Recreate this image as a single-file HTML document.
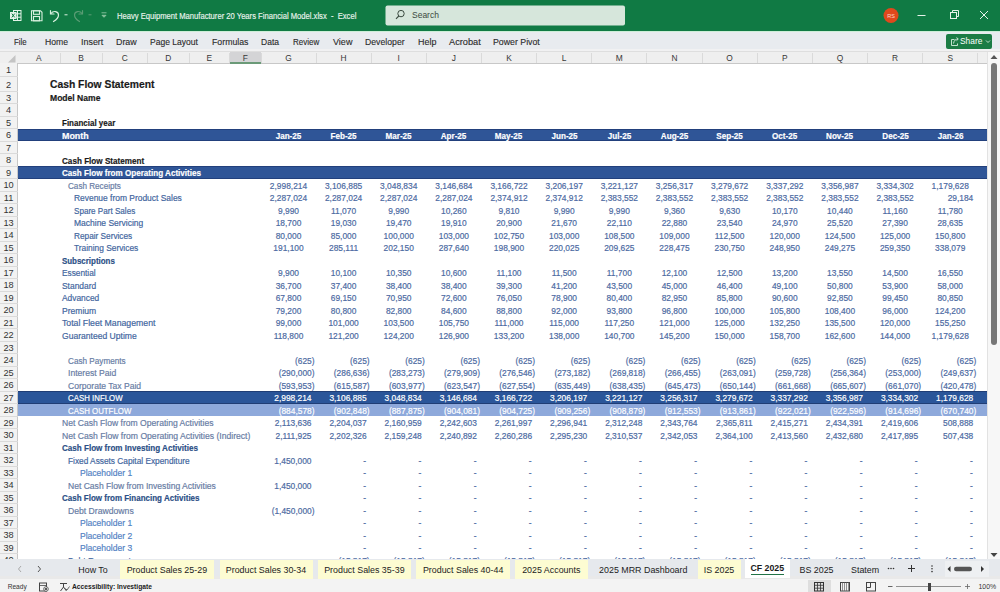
<!DOCTYPE html><html><head><meta charset="utf-8"><style>
*{margin:0;padding:0;box-sizing:border-box}
html,body{width:1000px;height:592px;overflow:hidden;background:#fff}
body{position:relative;font-family:"Liberation Sans",sans-serif;}
.a{position:absolute;white-space:nowrap}
.tb{position:absolute;left:0;top:0;width:1000px;height:31.6px;background:#107a44;border-bottom:1px solid #cdeed8}
.rb{position:absolute;left:0;top:31.6px;width:1000px;height:20.4px;background:#e8ebef}
.ch{position:absolute;left:0;top:52px;width:987px;height:11.5px;background:#efefef;border-bottom:1px solid #c8c8c8}
.rh{position:absolute;left:0;top:63px;width:17.5px;height:496px;background:#f2f2f2;border-right:1px solid #c8c8c8}
.cl{position:absolute;top:52.6px;height:11px;font-size:8.4px;color:#383838;text-align:center;line-height:11.5px}
.sep{position:absolute;top:53px;width:1px;height:10px;background:#dadada}
.rn{position:absolute;left:0;width:17px;font-size:9.2px;color:#333;text-align:center}
.c{position:absolute;font-size:8.4px;white-space:nowrap;line-height:1;-webkit-text-stroke:0.18px currentColor}
.t2{font-size:10.2px;font-weight:bold;color:#1a1a1a}
.t3{font-size:8.5px;font-weight:bold;color:#1a1a1a}
.hb{font-size:8.8px;font-weight:bold;color:#1a1a1a}
.hw{font-size:8.8px;font-weight:bold;color:#fff}
.sb{font-size:8.8px;font-weight:bold;color:#2b4f86}
.lg{color:#677ca4}
.lb{color:#41659e}
.lw{color:#fff}
.ph{color:#5382c4}
.dash{color:#7d92b6}
.cap{}
.num{color:#4c6aa2}
.band{position:absolute;left:17.5px;width:969.5px}
.tabs{position:absolute;left:0;top:558.75px;width:1000px;height:17.6px;background:#e6e9ed}
.status{position:absolute;left:0;top:576.3px;width:1000px;height:15.7px;background:#f3f3f3;border-top:3px solid #e9e9e9}
.tab{position:absolute;top:559.5px;height:19px;font-size:8.9px;color:#222;line-height:20px;text-align:center}
.ylw{background:#fdfcd0}
.menu{position:absolute;top:35.5px;font-size:9.1px;color:#2a2a2a;line-height:12px;-webkit-text-stroke:0.12px #2a2a2a}
</style></head><body>

<div class="tb"></div>
<div class="rb"></div>
<div class="ch"></div>
<div class="rh"></div>
<div class="cl" style="left:17.5px;width:42.8px">A</div>
<div class="sep" style="left:59.8px"></div>
<div class="cl" style="left:60.3px;width:41.7px">B</div>
<div class="sep" style="left:101.5px"></div>
<div class="cl" style="left:102px;width:45.5px">C</div>
<div class="sep" style="left:147.0px"></div>
<div class="cl" style="left:147.5px;width:41.5px">D</div>
<div class="sep" style="left:188.5px"></div>
<div class="cl" style="left:189px;width:40.80000000000001px">E</div>
<div class="sep" style="left:229.3px"></div>
<div class="a" style="left:229.8px;top:52px;width:31.19999999999999px;height:11.5px;background:#d4d4d6;border-bottom:2px solid #6b9a78"></div>
<div class="cl" style="left:229.8px;width:31.19999999999999px">F</div>
<div class="sep" style="left:260.5px"></div>
<div class="cl" style="left:261px;width:55.0px">G</div>
<div class="sep" style="left:315.5px"></div>
<div class="cl" style="left:316.0px;width:55.14999999999998px">H</div>
<div class="sep" style="left:370.65px"></div>
<div class="cl" style="left:371.15px;width:55.150000000000034px">I</div>
<div class="sep" style="left:425.8px"></div>
<div class="cl" style="left:426.3px;width:55.14999999999998px">J</div>
<div class="sep" style="left:480.95px"></div>
<div class="cl" style="left:481.45px;width:55.150000000000034px">K</div>
<div class="sep" style="left:536.1px"></div>
<div class="cl" style="left:536.6px;width:55.14999999999998px">L</div>
<div class="sep" style="left:591.25px"></div>
<div class="cl" style="left:591.75px;width:55.14999999999998px">M</div>
<div class="sep" style="left:646.4px"></div>
<div class="cl" style="left:646.9px;width:55.14999999999998px">N</div>
<div class="sep" style="left:701.55px"></div>
<div class="cl" style="left:702.05px;width:55.15000000000009px">O</div>
<div class="sep" style="left:756.7px"></div>
<div class="cl" style="left:757.2px;width:55.149999999999864px">P</div>
<div class="sep" style="left:811.8499999999999px"></div>
<div class="cl" style="left:812.3499999999999px;width:55.15000000000009px">Q</div>
<div class="sep" style="left:867.0px"></div>
<div class="cl" style="left:867.5px;width:55.14999999999998px">R</div>
<div class="sep" style="left:922.15px"></div>
<div class="cl" style="left:922.65px;width:55.14999999999998px">S</div>
<div class="sep" style="left:977.3px"></div>
<div class="rn" style="top:63.7px;height:12.3px;line-height:12.3px">1</div>
<div class="a" style="left:0;top:75.5px;width:17.5px;height:1px;background:#dadada"></div>
<div class="rn" style="top:79.10000000000001px;height:12.3px;line-height:12.3px">2</div>
<div class="a" style="left:0;top:90.9px;width:17.5px;height:1px;background:#dadada"></div>
<div class="rn" style="top:91.60000000000001px;height:12.3px;line-height:12.3px">3</div>
<div class="a" style="left:0;top:103.4px;width:17.5px;height:1px;background:#dadada"></div>
<div class="rn" style="top:104.10000000000001px;height:12.3px;line-height:12.3px">4</div>
<div class="a" style="left:0;top:115.9px;width:17.5px;height:1px;background:#dadada"></div>
<div class="rn" style="top:116.60000000000001px;height:12.3px;line-height:12.3px">5</div>
<div class="a" style="left:0;top:128.4px;width:17.5px;height:1px;background:#dadada"></div>
<div class="rn" style="top:129.1px;height:12.3px;line-height:12.3px">6</div>
<div class="a" style="left:0;top:140.9px;width:17.5px;height:1px;background:#dadada"></div>
<div class="rn" style="top:141.6px;height:12.3px;line-height:12.3px">7</div>
<div class="a" style="left:0;top:153.4px;width:17.5px;height:1px;background:#dadada"></div>
<div class="rn" style="top:154.1px;height:12.3px;line-height:12.3px">8</div>
<div class="a" style="left:0;top:165.9px;width:17.5px;height:1px;background:#dadada"></div>
<div class="rn" style="top:166.6px;height:12.3px;line-height:12.3px">9</div>
<div class="a" style="left:0;top:178.4px;width:17.5px;height:1px;background:#dadada"></div>
<div class="rn" style="top:179.1px;height:12.3px;line-height:12.3px">10</div>
<div class="a" style="left:0;top:190.9px;width:17.5px;height:1px;background:#dadada"></div>
<div class="rn" style="top:191.6px;height:12.3px;line-height:12.3px">11</div>
<div class="a" style="left:0;top:203.4px;width:17.5px;height:1px;background:#dadada"></div>
<div class="rn" style="top:204.1px;height:12.3px;line-height:12.3px">12</div>
<div class="a" style="left:0;top:215.9px;width:17.5px;height:1px;background:#dadada"></div>
<div class="rn" style="top:216.6px;height:12.3px;line-height:12.3px">13</div>
<div class="a" style="left:0;top:228.4px;width:17.5px;height:1px;background:#dadada"></div>
<div class="rn" style="top:229.1px;height:12.3px;line-height:12.3px">14</div>
<div class="a" style="left:0;top:240.9px;width:17.5px;height:1px;background:#dadada"></div>
<div class="rn" style="top:241.6px;height:12.3px;line-height:12.3px">15</div>
<div class="a" style="left:0;top:253.4px;width:17.5px;height:1px;background:#dadada"></div>
<div class="rn" style="top:254.09999999999997px;height:12.3px;line-height:12.3px">16</div>
<div class="a" style="left:0;top:265.9px;width:17.5px;height:1px;background:#dadada"></div>
<div class="rn" style="top:266.59999999999997px;height:12.3px;line-height:12.3px">17</div>
<div class="a" style="left:0;top:278.4px;width:17.5px;height:1px;background:#dadada"></div>
<div class="rn" style="top:279.09999999999997px;height:12.3px;line-height:12.3px">18</div>
<div class="a" style="left:0;top:290.9px;width:17.5px;height:1px;background:#dadada"></div>
<div class="rn" style="top:291.59999999999997px;height:12.3px;line-height:12.3px">19</div>
<div class="a" style="left:0;top:303.4px;width:17.5px;height:1px;background:#dadada"></div>
<div class="rn" style="top:304.09999999999997px;height:12.3px;line-height:12.3px">20</div>
<div class="a" style="left:0;top:315.9px;width:17.5px;height:1px;background:#dadada"></div>
<div class="rn" style="top:316.59999999999997px;height:12.3px;line-height:12.3px">21</div>
<div class="a" style="left:0;top:328.4px;width:17.5px;height:1px;background:#dadada"></div>
<div class="rn" style="top:329.09999999999997px;height:12.3px;line-height:12.3px">22</div>
<div class="a" style="left:0;top:340.9px;width:17.5px;height:1px;background:#dadada"></div>
<div class="rn" style="top:341.59999999999997px;height:12.3px;line-height:12.3px">23</div>
<div class="a" style="left:0;top:353.4px;width:17.5px;height:1px;background:#dadada"></div>
<div class="rn" style="top:354.09999999999997px;height:12.3px;line-height:12.3px">24</div>
<div class="a" style="left:0;top:365.9px;width:17.5px;height:1px;background:#dadada"></div>
<div class="rn" style="top:366.59999999999997px;height:12.3px;line-height:12.3px">25</div>
<div class="a" style="left:0;top:378.4px;width:17.5px;height:1px;background:#dadada"></div>
<div class="rn" style="top:379.09999999999997px;height:12.3px;line-height:12.3px">26</div>
<div class="a" style="left:0;top:390.9px;width:17.5px;height:1px;background:#dadada"></div>
<div class="rn" style="top:391.59999999999997px;height:12.3px;line-height:12.3px">27</div>
<div class="a" style="left:0;top:403.4px;width:17.5px;height:1px;background:#dadada"></div>
<div class="rn" style="top:404.09999999999997px;height:12.3px;line-height:12.3px">28</div>
<div class="a" style="left:0;top:415.9px;width:17.5px;height:1px;background:#dadada"></div>
<div class="rn" style="top:416.59999999999997px;height:12.3px;line-height:12.3px">29</div>
<div class="a" style="left:0;top:428.4px;width:17.5px;height:1px;background:#dadada"></div>
<div class="rn" style="top:429.09999999999997px;height:12.3px;line-height:12.3px">30</div>
<div class="a" style="left:0;top:440.9px;width:17.5px;height:1px;background:#dadada"></div>
<div class="rn" style="top:441.59999999999997px;height:12.3px;line-height:12.3px">31</div>
<div class="a" style="left:0;top:453.4px;width:17.5px;height:1px;background:#dadada"></div>
<div class="rn" style="top:454.09999999999997px;height:12.3px;line-height:12.3px">32</div>
<div class="a" style="left:0;top:465.9px;width:17.5px;height:1px;background:#dadada"></div>
<div class="rn" style="top:466.59999999999997px;height:12.3px;line-height:12.3px">33</div>
<div class="a" style="left:0;top:478.4px;width:17.5px;height:1px;background:#dadada"></div>
<div class="rn" style="top:479.09999999999997px;height:12.3px;line-height:12.3px">34</div>
<div class="a" style="left:0;top:490.9px;width:17.5px;height:1px;background:#dadada"></div>
<div class="rn" style="top:491.59999999999997px;height:12.3px;line-height:12.3px">35</div>
<div class="a" style="left:0;top:503.4px;width:17.5px;height:1px;background:#dadada"></div>
<div class="rn" style="top:504.09999999999997px;height:12.3px;line-height:12.3px">36</div>
<div class="a" style="left:0;top:515.9px;width:17.5px;height:1px;background:#dadada"></div>
<div class="rn" style="top:516.6px;height:12.3px;line-height:12.3px">37</div>
<div class="a" style="left:0;top:528.4px;width:17.5px;height:1px;background:#dadada"></div>
<div class="rn" style="top:529.1px;height:12.3px;line-height:12.3px">38</div>
<div class="a" style="left:0;top:540.9px;width:17.5px;height:1px;background:#dadada"></div>
<div class="rn" style="top:541.6px;height:12.3px;line-height:12.3px">39</div>
<div class="a" style="left:0;top:553.4px;width:17.5px;height:1px;background:#dadada"></div>
<div class="rn" style="top:554.1px;height:12.3px;line-height:12.3px">40</div>
<div class="a" style="left:0;top:565.9px;width:17.5px;height:1px;background:#dadada"></div>
<div class="band" style="top:128.9px;height:12.5px;background:#2f5597;border-top:1px solid #22407c;border-bottom:1px solid #22407c"></div>
<div class="band" style="top:166.4px;height:12.5px;background:#2f5597;border-top:1px solid #22407c;border-bottom:1px solid #22407c"></div>
<div class="band" style="top:391.4px;height:12.5px;background:#2a5599;border-top:1px solid #1f3d75;border-bottom:1px solid #1f3d75"></div>
<div class="band" style="top:403.9px;height:12.5px;background:#8ea9db;border-top:1px solid #8ea9db;border-bottom:1px solid #8ea9db"></div>
<div class="c t2" style="left:50.4px;top:86.80000000000001px;transform:translateY(-70%) scaleX(1.0134);transform-origin:0 0">Cash Flow Statement</div>
<div class="c t3" style="left:50.4px;top:99.80000000000001px;transform:translateY(-70%) scaleX(1.0067);transform-origin:0 0">Model Name</div>
<div class="c hb" style="left:61.9px;top:125.30000000000001px;transform:translateY(-70%) scaleX(0.9084);transform-origin:0 0">Financial year</div>
<div class="c hw" style="left:61.9px;top:137.8px;transform:translateY(-70%) scaleX(1.0122);transform-origin:0 0">Month</div>
<div class="c hb" style="left:61.9px;top:162.8px;transform:translateY(-70%) scaleX(0.9240);transform-origin:0 0">Cash Flow Statement</div>
<div class="c hw" style="left:61.9px;top:175.3px;transform:translateY(-70%) scaleX(0.9193);transform-origin:0 0">Cash Flow from Operating Activities</div>
<div class="c lg" style="left:67.9px;top:187.8px;transform:translateY(-70%) scaleX(0.9695);transform-origin:0 0">Cash Receipts</div>
<div class="c lb" style="left:73.9px;top:200.3px;transform:translateY(-70%) scaleX(1.0068);transform-origin:0 0">Revenue from Product Sales</div>
<div class="c lb" style="left:73.9px;top:212.8px;transform:translateY(-70%) scaleX(0.9667);transform-origin:0 0">Spare Part Sales</div>
<div class="c lb" style="left:73.9px;top:225.3px;transform:translateY(-70%) scaleX(1.0128);transform-origin:0 0">Machine Servicing</div>
<div class="c lb" style="left:73.9px;top:237.8px;transform:translateY(-70%) scaleX(0.9846);transform-origin:0 0">Repair Services</div>
<div class="c lb" style="left:73.9px;top:250.3px;transform:translateY(-70%) scaleX(0.9971);transform-origin:0 0">Training Services</div>
<div class="c sb" style="left:61.9px;top:262.79999999999995px;transform:translateY(-70%) scaleX(0.9002);transform-origin:0 0">Subscriptions</div>
<div class="c lb" style="left:61.9px;top:275.29999999999995px;transform:translateY(-70%) scaleX(0.9887);transform-origin:0 0">Essential</div>
<div class="c lb" style="left:61.9px;top:287.79999999999995px;transform:translateY(-70%) scaleX(1.0062);transform-origin:0 0">Standard</div>
<div class="c lb" style="left:61.9px;top:300.29999999999995px;transform:translateY(-70%) scaleX(0.9987);transform-origin:0 0">Advanced</div>
<div class="c lb" style="left:61.9px;top:312.79999999999995px;transform:translateY(-70%) scaleX(1.0208);transform-origin:0 0">Premium</div>
<div class="c lb" style="left:61.9px;top:325.29999999999995px;transform:translateY(-70%) scaleX(1.0396);transform-origin:0 0">Total Fleet Management</div>
<div class="c lb" style="left:61.9px;top:337.79999999999995px;transform:translateY(-70%) scaleX(1.0220);transform-origin:0 0">Guaranteed Uptime</div>
<div class="c lg" style="left:67.9px;top:362.79999999999995px;transform:translateY(-70%) scaleX(0.9744);transform-origin:0 0">Cash Payments</div>
<div class="c lg" style="left:67.9px;top:375.29999999999995px;transform:translateY(-70%) scaleX(1.0272);transform-origin:0 0">Interest Paid</div>
<div class="c lg" style="left:67.9px;top:387.79999999999995px;transform:translateY(-70%) scaleX(1.0211);transform-origin:0 0">Corporate Tax Paid</div>
<div class="c lw cap" style="left:67.9px;top:400.29999999999995px;transform:translateY(-70%) scaleX(0.9387);transform-origin:0 0">CASH INFLOW</div>
<div class="c lw cap" style="left:67.9px;top:412.79999999999995px;transform:translateY(-70%) scaleX(0.9382);transform-origin:0 0">CASH OUTFLOW</div>
<div class="c lg" style="left:61.9px;top:425.29999999999995px;transform:translateY(-70%) scaleX(1.0231);transform-origin:0 0">Net Cash Flow from Operating Activities</div>
<div class="c lg" style="left:61.9px;top:437.79999999999995px;transform:translateY(-70%) scaleX(1.0270);transform-origin:0 0">Net Cash Flow from Operating Activities (Indirect)</div>
<div class="c sb" style="left:61.9px;top:450.29999999999995px;transform:translateY(-70%) scaleX(0.9172);transform-origin:0 0">Cash Flow from Investing Activities</div>
<div class="c lb" style="left:67.9px;top:462.79999999999995px;transform:translateY(-70%) scaleX(0.9898);transform-origin:0 0">Fixed Assets Capital Expenditure</div>
<div class="c lb ph" style="left:79.9px;top:475.29999999999995px;transform:translateY(-70%) scaleX(1.0192);transform-origin:0 0">Placeholder 1</div>
<div class="c lg" style="left:67.9px;top:487.79999999999995px;transform:translateY(-70%) scaleX(1.0213);transform-origin:0 0">Net Cash Flow from Investing Activities</div>
<div class="c sb" style="left:61.9px;top:500.29999999999995px;transform:translateY(-70%) scaleX(0.9094);transform-origin:0 0">Cash Flow from Financing Activities</div>
<div class="c lg" style="left:67.9px;top:512.8px;transform:translateY(-70%) scaleX(1.0303);transform-origin:0 0">Debt Drawdowns</div>
<div class="c lb ph" style="left:79.9px;top:525.3px;transform:translateY(-70%) scaleX(1.0192);transform-origin:0 0">Placeholder 1</div>
<div class="c lb ph" style="left:79.9px;top:537.8px;transform:translateY(-70%) scaleX(1.0192);transform-origin:0 0">Placeholder 2</div>
<div class="c lb ph" style="left:79.9px;top:550.3px;transform:translateY(-70%) scaleX(1.0192);transform-origin:0 0">Placeholder 3</div>
<div class="c lb" style="left:67.9px;top:563.0999999999999px;transform:translateY(-70%) scaleX(1.0000);transform-origin:0 0">Debt Repayments</div>
<div class="c hw" style="left:261px;width:55.0px;text-align:center;top:138.4px;transform:translateY(-70%) scaleX(0.92)">Jan-25</div>
<div class="c hw" style="left:316.0px;width:55.14999999999998px;text-align:center;top:138.4px;transform:translateY(-70%) scaleX(0.92)">Feb-25</div>
<div class="c hw" style="left:371.15px;width:55.150000000000034px;text-align:center;top:138.4px;transform:translateY(-70%) scaleX(0.92)">Mar-25</div>
<div class="c hw" style="left:426.3px;width:55.14999999999998px;text-align:center;top:138.4px;transform:translateY(-70%) scaleX(0.92)">Apr-25</div>
<div class="c hw" style="left:481.45px;width:55.150000000000034px;text-align:center;top:138.4px;transform:translateY(-70%) scaleX(0.92)">May-25</div>
<div class="c hw" style="left:536.6px;width:55.14999999999998px;text-align:center;top:138.4px;transform:translateY(-70%) scaleX(0.92)">Jun-25</div>
<div class="c hw" style="left:591.75px;width:55.14999999999998px;text-align:center;top:138.4px;transform:translateY(-70%) scaleX(0.92)">Jul-25</div>
<div class="c hw" style="left:646.9px;width:55.14999999999998px;text-align:center;top:138.4px;transform:translateY(-70%) scaleX(0.92)">Aug-25</div>
<div class="c hw" style="left:702.05px;width:55.15000000000009px;text-align:center;top:138.4px;transform:translateY(-70%) scaleX(0.92)">Sep-25</div>
<div class="c hw" style="left:757.2px;width:55.149999999999864px;text-align:center;top:138.4px;transform:translateY(-70%) scaleX(0.92)">Oct-25</div>
<div class="c hw" style="left:812.3499999999999px;width:55.15000000000009px;text-align:center;top:138.4px;transform:translateY(-70%) scaleX(0.92)">Nov-25</div>
<div class="c hw" style="left:867.5px;width:55.14999999999998px;text-align:center;top:138.4px;transform:translateY(-70%) scaleX(0.92)">Dec-25</div>
<div class="c hw" style="left:922.65px;width:55.14999999999998px;text-align:center;top:138.4px;transform:translateY(-70%) scaleX(0.92)">Jan-26</div>
<div class="c num" style="left:261px;width:55.0px;text-align:center;top:187.5px;transform:translateY(-70%)">2,998,214</div>
<div class="c num" style="left:316.0px;width:55.14999999999998px;text-align:center;top:187.5px;transform:translateY(-70%)">3,106,885</div>
<div class="c num" style="left:371.15px;width:55.150000000000034px;text-align:center;top:187.5px;transform:translateY(-70%)">3,048,834</div>
<div class="c num" style="left:426.3px;width:55.14999999999998px;text-align:center;top:187.5px;transform:translateY(-70%)">3,146,684</div>
<div class="c num" style="left:481.45px;width:55.150000000000034px;text-align:center;top:187.5px;transform:translateY(-70%)">3,166,722</div>
<div class="c num" style="left:536.6px;width:55.14999999999998px;text-align:center;top:187.5px;transform:translateY(-70%)">3,206,197</div>
<div class="c num" style="left:591.75px;width:55.14999999999998px;text-align:center;top:187.5px;transform:translateY(-70%)">3,221,127</div>
<div class="c num" style="left:646.9px;width:55.14999999999998px;text-align:center;top:187.5px;transform:translateY(-70%)">3,256,317</div>
<div class="c num" style="left:702.05px;width:55.15000000000009px;text-align:center;top:187.5px;transform:translateY(-70%)">3,279,672</div>
<div class="c num" style="left:757.2px;width:55.149999999999864px;text-align:center;top:187.5px;transform:translateY(-70%)">3,337,292</div>
<div class="c num" style="left:812.3499999999999px;width:55.15000000000009px;text-align:center;top:187.5px;transform:translateY(-70%)">3,356,987</div>
<div class="c num" style="left:867.5px;width:55.14999999999998px;text-align:center;top:187.5px;transform:translateY(-70%)">3,334,302</div>
<div class="c num" style="left:922.65px;width:55.14999999999998px;text-align:center;top:187.5px;transform:translateY(-70%)">1,179,628</div>
<div class="c num" style="left:261px;width:55.0px;text-align:center;top:200.0px;transform:translateY(-70%)">2,287,024</div>
<div class="c num" style="left:316.0px;width:55.14999999999998px;text-align:center;top:200.0px;transform:translateY(-70%)">2,287,024</div>
<div class="c num" style="left:371.15px;width:55.150000000000034px;text-align:center;top:200.0px;transform:translateY(-70%)">2,287,024</div>
<div class="c num" style="left:426.3px;width:55.14999999999998px;text-align:center;top:200.0px;transform:translateY(-70%)">2,287,024</div>
<div class="c num" style="left:481.45px;width:55.150000000000034px;text-align:center;top:200.0px;transform:translateY(-70%)">2,374,912</div>
<div class="c num" style="left:536.6px;width:55.14999999999998px;text-align:center;top:200.0px;transform:translateY(-70%)">2,374,912</div>
<div class="c num" style="left:591.75px;width:55.14999999999998px;text-align:center;top:200.0px;transform:translateY(-70%)">2,383,552</div>
<div class="c num" style="left:646.9px;width:55.14999999999998px;text-align:center;top:200.0px;transform:translateY(-70%)">2,383,552</div>
<div class="c num" style="left:702.05px;width:55.15000000000009px;text-align:center;top:200.0px;transform:translateY(-70%)">2,383,552</div>
<div class="c num" style="left:757.2px;width:55.149999999999864px;text-align:center;top:200.0px;transform:translateY(-70%)">2,383,552</div>
<div class="c num" style="left:812.3499999999999px;width:55.15000000000009px;text-align:center;top:200.0px;transform:translateY(-70%)">2,383,552</div>
<div class="c num" style="left:867.5px;width:55.14999999999998px;text-align:center;top:200.0px;transform:translateY(-70%)">2,383,552</div>
<div class="c num" style="left:922.65px;width:50.64999999999998px;text-align:right;top:200.0px;transform:translateY(-70%)">29,184</div>
<div class="c num" style="left:261px;width:55.0px;text-align:center;top:212.5px;transform:translateY(-70%)">9,990</div>
<div class="c num" style="left:316.0px;width:55.14999999999998px;text-align:center;top:212.5px;transform:translateY(-70%)">11,070</div>
<div class="c num" style="left:371.15px;width:55.150000000000034px;text-align:center;top:212.5px;transform:translateY(-70%)">9,990</div>
<div class="c num" style="left:426.3px;width:55.14999999999998px;text-align:center;top:212.5px;transform:translateY(-70%)">10,260</div>
<div class="c num" style="left:481.45px;width:55.150000000000034px;text-align:center;top:212.5px;transform:translateY(-70%)">9,810</div>
<div class="c num" style="left:536.6px;width:55.14999999999998px;text-align:center;top:212.5px;transform:translateY(-70%)">9,990</div>
<div class="c num" style="left:591.75px;width:55.14999999999998px;text-align:center;top:212.5px;transform:translateY(-70%)">9,990</div>
<div class="c num" style="left:646.9px;width:55.14999999999998px;text-align:center;top:212.5px;transform:translateY(-70%)">9,360</div>
<div class="c num" style="left:702.05px;width:55.15000000000009px;text-align:center;top:212.5px;transform:translateY(-70%)">9,630</div>
<div class="c num" style="left:757.2px;width:55.149999999999864px;text-align:center;top:212.5px;transform:translateY(-70%)">10,170</div>
<div class="c num" style="left:812.3499999999999px;width:55.15000000000009px;text-align:center;top:212.5px;transform:translateY(-70%)">10,440</div>
<div class="c num" style="left:867.5px;width:55.14999999999998px;text-align:center;top:212.5px;transform:translateY(-70%)">11,160</div>
<div class="c num" style="left:922.65px;width:55.14999999999998px;text-align:center;top:212.5px;transform:translateY(-70%)">11,780</div>
<div class="c num" style="left:261px;width:55.0px;text-align:center;top:225.0px;transform:translateY(-70%)">18,700</div>
<div class="c num" style="left:316.0px;width:55.14999999999998px;text-align:center;top:225.0px;transform:translateY(-70%)">19,030</div>
<div class="c num" style="left:371.15px;width:55.150000000000034px;text-align:center;top:225.0px;transform:translateY(-70%)">19,470</div>
<div class="c num" style="left:426.3px;width:55.14999999999998px;text-align:center;top:225.0px;transform:translateY(-70%)">19,910</div>
<div class="c num" style="left:481.45px;width:55.150000000000034px;text-align:center;top:225.0px;transform:translateY(-70%)">20,900</div>
<div class="c num" style="left:536.6px;width:55.14999999999998px;text-align:center;top:225.0px;transform:translateY(-70%)">21,670</div>
<div class="c num" style="left:591.75px;width:55.14999999999998px;text-align:center;top:225.0px;transform:translateY(-70%)">22,110</div>
<div class="c num" style="left:646.9px;width:55.14999999999998px;text-align:center;top:225.0px;transform:translateY(-70%)">22,880</div>
<div class="c num" style="left:702.05px;width:55.15000000000009px;text-align:center;top:225.0px;transform:translateY(-70%)">23,540</div>
<div class="c num" style="left:757.2px;width:55.149999999999864px;text-align:center;top:225.0px;transform:translateY(-70%)">24,970</div>
<div class="c num" style="left:812.3499999999999px;width:55.15000000000009px;text-align:center;top:225.0px;transform:translateY(-70%)">25,520</div>
<div class="c num" style="left:867.5px;width:55.14999999999998px;text-align:center;top:225.0px;transform:translateY(-70%)">27,390</div>
<div class="c num" style="left:922.65px;width:55.14999999999998px;text-align:center;top:225.0px;transform:translateY(-70%)">28,635</div>
<div class="c num" style="left:261px;width:55.0px;text-align:center;top:237.5px;transform:translateY(-70%)">80,000</div>
<div class="c num" style="left:316.0px;width:55.14999999999998px;text-align:center;top:237.5px;transform:translateY(-70%)">85,000</div>
<div class="c num" style="left:371.15px;width:55.150000000000034px;text-align:center;top:237.5px;transform:translateY(-70%)">100,000</div>
<div class="c num" style="left:426.3px;width:55.14999999999998px;text-align:center;top:237.5px;transform:translateY(-70%)">103,000</div>
<div class="c num" style="left:481.45px;width:55.150000000000034px;text-align:center;top:237.5px;transform:translateY(-70%)">102,750</div>
<div class="c num" style="left:536.6px;width:55.14999999999998px;text-align:center;top:237.5px;transform:translateY(-70%)">103,000</div>
<div class="c num" style="left:591.75px;width:55.14999999999998px;text-align:center;top:237.5px;transform:translateY(-70%)">108,500</div>
<div class="c num" style="left:646.9px;width:55.14999999999998px;text-align:center;top:237.5px;transform:translateY(-70%)">109,000</div>
<div class="c num" style="left:702.05px;width:55.15000000000009px;text-align:center;top:237.5px;transform:translateY(-70%)">112,500</div>
<div class="c num" style="left:757.2px;width:55.149999999999864px;text-align:center;top:237.5px;transform:translateY(-70%)">120,000</div>
<div class="c num" style="left:812.3499999999999px;width:55.15000000000009px;text-align:center;top:237.5px;transform:translateY(-70%)">124,500</div>
<div class="c num" style="left:867.5px;width:55.14999999999998px;text-align:center;top:237.5px;transform:translateY(-70%)">125,000</div>
<div class="c num" style="left:922.65px;width:55.14999999999998px;text-align:center;top:237.5px;transform:translateY(-70%)">150,800</div>
<div class="c num" style="left:261px;width:55.0px;text-align:center;top:250.0px;transform:translateY(-70%)">191,100</div>
<div class="c num" style="left:316.0px;width:55.14999999999998px;text-align:center;top:250.0px;transform:translateY(-70%)">285,111</div>
<div class="c num" style="left:371.15px;width:55.150000000000034px;text-align:center;top:250.0px;transform:translateY(-70%)">202,150</div>
<div class="c num" style="left:426.3px;width:55.14999999999998px;text-align:center;top:250.0px;transform:translateY(-70%)">287,640</div>
<div class="c num" style="left:481.45px;width:55.150000000000034px;text-align:center;top:250.0px;transform:translateY(-70%)">198,900</div>
<div class="c num" style="left:536.6px;width:55.14999999999998px;text-align:center;top:250.0px;transform:translateY(-70%)">220,025</div>
<div class="c num" style="left:591.75px;width:55.14999999999998px;text-align:center;top:250.0px;transform:translateY(-70%)">209,625</div>
<div class="c num" style="left:646.9px;width:55.14999999999998px;text-align:center;top:250.0px;transform:translateY(-70%)">228,475</div>
<div class="c num" style="left:702.05px;width:55.15000000000009px;text-align:center;top:250.0px;transform:translateY(-70%)">230,750</div>
<div class="c num" style="left:757.2px;width:55.149999999999864px;text-align:center;top:250.0px;transform:translateY(-70%)">248,950</div>
<div class="c num" style="left:812.3499999999999px;width:55.15000000000009px;text-align:center;top:250.0px;transform:translateY(-70%)">249,275</div>
<div class="c num" style="left:867.5px;width:55.14999999999998px;text-align:center;top:250.0px;transform:translateY(-70%)">259,350</div>
<div class="c num" style="left:922.65px;width:55.14999999999998px;text-align:center;top:250.0px;transform:translateY(-70%)">338,079</div>
<div class="c num" style="left:261px;width:55.0px;text-align:center;top:275.0px;transform:translateY(-70%)">9,900</div>
<div class="c num" style="left:316.0px;width:55.14999999999998px;text-align:center;top:275.0px;transform:translateY(-70%)">10,100</div>
<div class="c num" style="left:371.15px;width:55.150000000000034px;text-align:center;top:275.0px;transform:translateY(-70%)">10,350</div>
<div class="c num" style="left:426.3px;width:55.14999999999998px;text-align:center;top:275.0px;transform:translateY(-70%)">10,600</div>
<div class="c num" style="left:481.45px;width:55.150000000000034px;text-align:center;top:275.0px;transform:translateY(-70%)">11,100</div>
<div class="c num" style="left:536.6px;width:55.14999999999998px;text-align:center;top:275.0px;transform:translateY(-70%)">11,500</div>
<div class="c num" style="left:591.75px;width:55.14999999999998px;text-align:center;top:275.0px;transform:translateY(-70%)">11,700</div>
<div class="c num" style="left:646.9px;width:55.14999999999998px;text-align:center;top:275.0px;transform:translateY(-70%)">12,100</div>
<div class="c num" style="left:702.05px;width:55.15000000000009px;text-align:center;top:275.0px;transform:translateY(-70%)">12,500</div>
<div class="c num" style="left:757.2px;width:55.149999999999864px;text-align:center;top:275.0px;transform:translateY(-70%)">13,200</div>
<div class="c num" style="left:812.3499999999999px;width:55.15000000000009px;text-align:center;top:275.0px;transform:translateY(-70%)">13,550</div>
<div class="c num" style="left:867.5px;width:55.14999999999998px;text-align:center;top:275.0px;transform:translateY(-70%)">14,500</div>
<div class="c num" style="left:922.65px;width:55.14999999999998px;text-align:center;top:275.0px;transform:translateY(-70%)">16,550</div>
<div class="c num" style="left:261px;width:55.0px;text-align:center;top:287.5px;transform:translateY(-70%)">36,700</div>
<div class="c num" style="left:316.0px;width:55.14999999999998px;text-align:center;top:287.5px;transform:translateY(-70%)">37,400</div>
<div class="c num" style="left:371.15px;width:55.150000000000034px;text-align:center;top:287.5px;transform:translateY(-70%)">38,400</div>
<div class="c num" style="left:426.3px;width:55.14999999999998px;text-align:center;top:287.5px;transform:translateY(-70%)">38,400</div>
<div class="c num" style="left:481.45px;width:55.150000000000034px;text-align:center;top:287.5px;transform:translateY(-70%)">39,300</div>
<div class="c num" style="left:536.6px;width:55.14999999999998px;text-align:center;top:287.5px;transform:translateY(-70%)">41,200</div>
<div class="c num" style="left:591.75px;width:55.14999999999998px;text-align:center;top:287.5px;transform:translateY(-70%)">43,500</div>
<div class="c num" style="left:646.9px;width:55.14999999999998px;text-align:center;top:287.5px;transform:translateY(-70%)">45,000</div>
<div class="c num" style="left:702.05px;width:55.15000000000009px;text-align:center;top:287.5px;transform:translateY(-70%)">46,400</div>
<div class="c num" style="left:757.2px;width:55.149999999999864px;text-align:center;top:287.5px;transform:translateY(-70%)">49,100</div>
<div class="c num" style="left:812.3499999999999px;width:55.15000000000009px;text-align:center;top:287.5px;transform:translateY(-70%)">50,800</div>
<div class="c num" style="left:867.5px;width:55.14999999999998px;text-align:center;top:287.5px;transform:translateY(-70%)">53,900</div>
<div class="c num" style="left:922.65px;width:55.14999999999998px;text-align:center;top:287.5px;transform:translateY(-70%)">58,000</div>
<div class="c num" style="left:261px;width:55.0px;text-align:center;top:300.0px;transform:translateY(-70%)">67,800</div>
<div class="c num" style="left:316.0px;width:55.14999999999998px;text-align:center;top:300.0px;transform:translateY(-70%)">69,150</div>
<div class="c num" style="left:371.15px;width:55.150000000000034px;text-align:center;top:300.0px;transform:translateY(-70%)">70,950</div>
<div class="c num" style="left:426.3px;width:55.14999999999998px;text-align:center;top:300.0px;transform:translateY(-70%)">72,600</div>
<div class="c num" style="left:481.45px;width:55.150000000000034px;text-align:center;top:300.0px;transform:translateY(-70%)">76,050</div>
<div class="c num" style="left:536.6px;width:55.14999999999998px;text-align:center;top:300.0px;transform:translateY(-70%)">78,900</div>
<div class="c num" style="left:591.75px;width:55.14999999999998px;text-align:center;top:300.0px;transform:translateY(-70%)">80,400</div>
<div class="c num" style="left:646.9px;width:55.14999999999998px;text-align:center;top:300.0px;transform:translateY(-70%)">82,950</div>
<div class="c num" style="left:702.05px;width:55.15000000000009px;text-align:center;top:300.0px;transform:translateY(-70%)">85,800</div>
<div class="c num" style="left:757.2px;width:55.149999999999864px;text-align:center;top:300.0px;transform:translateY(-70%)">90,600</div>
<div class="c num" style="left:812.3499999999999px;width:55.15000000000009px;text-align:center;top:300.0px;transform:translateY(-70%)">92,850</div>
<div class="c num" style="left:867.5px;width:55.14999999999998px;text-align:center;top:300.0px;transform:translateY(-70%)">99,450</div>
<div class="c num" style="left:922.65px;width:55.14999999999998px;text-align:center;top:300.0px;transform:translateY(-70%)">80,850</div>
<div class="c num" style="left:261px;width:55.0px;text-align:center;top:312.5px;transform:translateY(-70%)">79,200</div>
<div class="c num" style="left:316.0px;width:55.14999999999998px;text-align:center;top:312.5px;transform:translateY(-70%)">80,800</div>
<div class="c num" style="left:371.15px;width:55.150000000000034px;text-align:center;top:312.5px;transform:translateY(-70%)">82,800</div>
<div class="c num" style="left:426.3px;width:55.14999999999998px;text-align:center;top:312.5px;transform:translateY(-70%)">84,600</div>
<div class="c num" style="left:481.45px;width:55.150000000000034px;text-align:center;top:312.5px;transform:translateY(-70%)">88,800</div>
<div class="c num" style="left:536.6px;width:55.14999999999998px;text-align:center;top:312.5px;transform:translateY(-70%)">92,000</div>
<div class="c num" style="left:591.75px;width:55.14999999999998px;text-align:center;top:312.5px;transform:translateY(-70%)">93,800</div>
<div class="c num" style="left:646.9px;width:55.14999999999998px;text-align:center;top:312.5px;transform:translateY(-70%)">96,800</div>
<div class="c num" style="left:702.05px;width:55.15000000000009px;text-align:center;top:312.5px;transform:translateY(-70%)">100,000</div>
<div class="c num" style="left:757.2px;width:55.149999999999864px;text-align:center;top:312.5px;transform:translateY(-70%)">105,800</div>
<div class="c num" style="left:812.3499999999999px;width:55.15000000000009px;text-align:center;top:312.5px;transform:translateY(-70%)">108,400</div>
<div class="c num" style="left:867.5px;width:55.14999999999998px;text-align:center;top:312.5px;transform:translateY(-70%)">96,000</div>
<div class="c num" style="left:922.65px;width:55.14999999999998px;text-align:center;top:312.5px;transform:translateY(-70%)">124,200</div>
<div class="c num" style="left:261px;width:55.0px;text-align:center;top:325.0px;transform:translateY(-70%)">99,000</div>
<div class="c num" style="left:316.0px;width:55.14999999999998px;text-align:center;top:325.0px;transform:translateY(-70%)">101,000</div>
<div class="c num" style="left:371.15px;width:55.150000000000034px;text-align:center;top:325.0px;transform:translateY(-70%)">103,500</div>
<div class="c num" style="left:426.3px;width:55.14999999999998px;text-align:center;top:325.0px;transform:translateY(-70%)">105,750</div>
<div class="c num" style="left:481.45px;width:55.150000000000034px;text-align:center;top:325.0px;transform:translateY(-70%)">111,000</div>
<div class="c num" style="left:536.6px;width:55.14999999999998px;text-align:center;top:325.0px;transform:translateY(-70%)">115,000</div>
<div class="c num" style="left:591.75px;width:55.14999999999998px;text-align:center;top:325.0px;transform:translateY(-70%)">117,250</div>
<div class="c num" style="left:646.9px;width:55.14999999999998px;text-align:center;top:325.0px;transform:translateY(-70%)">121,000</div>
<div class="c num" style="left:702.05px;width:55.15000000000009px;text-align:center;top:325.0px;transform:translateY(-70%)">125,000</div>
<div class="c num" style="left:757.2px;width:55.149999999999864px;text-align:center;top:325.0px;transform:translateY(-70%)">132,250</div>
<div class="c num" style="left:812.3499999999999px;width:55.15000000000009px;text-align:center;top:325.0px;transform:translateY(-70%)">135,500</div>
<div class="c num" style="left:867.5px;width:55.14999999999998px;text-align:center;top:325.0px;transform:translateY(-70%)">120,000</div>
<div class="c num" style="left:922.65px;width:55.14999999999998px;text-align:center;top:325.0px;transform:translateY(-70%)">155,250</div>
<div class="c num" style="left:261px;width:55.0px;text-align:center;top:337.5px;transform:translateY(-70%)">118,800</div>
<div class="c num" style="left:316.0px;width:55.14999999999998px;text-align:center;top:337.5px;transform:translateY(-70%)">121,200</div>
<div class="c num" style="left:371.15px;width:55.150000000000034px;text-align:center;top:337.5px;transform:translateY(-70%)">124,200</div>
<div class="c num" style="left:426.3px;width:55.14999999999998px;text-align:center;top:337.5px;transform:translateY(-70%)">126,900</div>
<div class="c num" style="left:481.45px;width:55.150000000000034px;text-align:center;top:337.5px;transform:translateY(-70%)">133,200</div>
<div class="c num" style="left:536.6px;width:55.14999999999998px;text-align:center;top:337.5px;transform:translateY(-70%)">138,000</div>
<div class="c num" style="left:591.75px;width:55.14999999999998px;text-align:center;top:337.5px;transform:translateY(-70%)">140,700</div>
<div class="c num" style="left:646.9px;width:55.14999999999998px;text-align:center;top:337.5px;transform:translateY(-70%)">145,200</div>
<div class="c num" style="left:702.05px;width:55.15000000000009px;text-align:center;top:337.5px;transform:translateY(-70%)">150,000</div>
<div class="c num" style="left:757.2px;width:55.149999999999864px;text-align:center;top:337.5px;transform:translateY(-70%)">158,700</div>
<div class="c num" style="left:812.3499999999999px;width:55.15000000000009px;text-align:center;top:337.5px;transform:translateY(-70%)">162,600</div>
<div class="c num" style="left:867.5px;width:55.14999999999998px;text-align:center;top:337.5px;transform:translateY(-70%)">144,000</div>
<div class="c num" style="left:922.65px;width:55.14999999999998px;text-align:center;top:337.5px;transform:translateY(-70%)">1,179,628</div>
<div class="c num" style="left:261px;width:53.5px;text-align:right;top:362.5px;transform:translateY(-70%)">(625)</div>
<div class="c num" style="left:316.0px;width:53.64999999999998px;text-align:right;top:362.5px;transform:translateY(-70%)">(625)</div>
<div class="c num" style="left:371.15px;width:53.650000000000034px;text-align:right;top:362.5px;transform:translateY(-70%)">(625)</div>
<div class="c num" style="left:426.3px;width:53.64999999999998px;text-align:right;top:362.5px;transform:translateY(-70%)">(625)</div>
<div class="c num" style="left:481.45px;width:53.650000000000034px;text-align:right;top:362.5px;transform:translateY(-70%)">(625)</div>
<div class="c num" style="left:536.6px;width:53.64999999999998px;text-align:right;top:362.5px;transform:translateY(-70%)">(625)</div>
<div class="c num" style="left:591.75px;width:53.64999999999998px;text-align:right;top:362.5px;transform:translateY(-70%)">(625)</div>
<div class="c num" style="left:646.9px;width:53.64999999999998px;text-align:right;top:362.5px;transform:translateY(-70%)">(625)</div>
<div class="c num" style="left:702.05px;width:53.65000000000009px;text-align:right;top:362.5px;transform:translateY(-70%)">(625)</div>
<div class="c num" style="left:757.2px;width:53.649999999999864px;text-align:right;top:362.5px;transform:translateY(-70%)">(625)</div>
<div class="c num" style="left:812.3499999999999px;width:53.65000000000009px;text-align:right;top:362.5px;transform:translateY(-70%)">(625)</div>
<div class="c num" style="left:867.5px;width:53.64999999999998px;text-align:right;top:362.5px;transform:translateY(-70%)">(625)</div>
<div class="c num" style="left:922.65px;width:53.64999999999998px;text-align:right;top:362.5px;transform:translateY(-70%)">(625)</div>
<div class="c num" style="left:261px;width:53.5px;text-align:right;top:375.0px;transform:translateY(-70%)">(290,000)</div>
<div class="c num" style="left:316.0px;width:53.64999999999998px;text-align:right;top:375.0px;transform:translateY(-70%)">(286,636)</div>
<div class="c num" style="left:371.15px;width:53.650000000000034px;text-align:right;top:375.0px;transform:translateY(-70%)">(283,273)</div>
<div class="c num" style="left:426.3px;width:53.64999999999998px;text-align:right;top:375.0px;transform:translateY(-70%)">(279,909)</div>
<div class="c num" style="left:481.45px;width:53.650000000000034px;text-align:right;top:375.0px;transform:translateY(-70%)">(276,546)</div>
<div class="c num" style="left:536.6px;width:53.64999999999998px;text-align:right;top:375.0px;transform:translateY(-70%)">(273,182)</div>
<div class="c num" style="left:591.75px;width:53.64999999999998px;text-align:right;top:375.0px;transform:translateY(-70%)">(269,818)</div>
<div class="c num" style="left:646.9px;width:53.64999999999998px;text-align:right;top:375.0px;transform:translateY(-70%)">(266,455)</div>
<div class="c num" style="left:702.05px;width:53.65000000000009px;text-align:right;top:375.0px;transform:translateY(-70%)">(263,091)</div>
<div class="c num" style="left:757.2px;width:53.649999999999864px;text-align:right;top:375.0px;transform:translateY(-70%)">(259,728)</div>
<div class="c num" style="left:812.3499999999999px;width:53.65000000000009px;text-align:right;top:375.0px;transform:translateY(-70%)">(256,364)</div>
<div class="c num" style="left:867.5px;width:53.64999999999998px;text-align:right;top:375.0px;transform:translateY(-70%)">(253,000)</div>
<div class="c num" style="left:922.65px;width:53.64999999999998px;text-align:right;top:375.0px;transform:translateY(-70%)">(249,637)</div>
<div class="c num" style="left:261px;width:53.5px;text-align:right;top:387.5px;transform:translateY(-70%)">(593,953)</div>
<div class="c num" style="left:316.0px;width:53.64999999999998px;text-align:right;top:387.5px;transform:translateY(-70%)">(615,587)</div>
<div class="c num" style="left:371.15px;width:53.650000000000034px;text-align:right;top:387.5px;transform:translateY(-70%)">(603,977)</div>
<div class="c num" style="left:426.3px;width:53.64999999999998px;text-align:right;top:387.5px;transform:translateY(-70%)">(623,547)</div>
<div class="c num" style="left:481.45px;width:53.650000000000034px;text-align:right;top:387.5px;transform:translateY(-70%)">(627,554)</div>
<div class="c num" style="left:536.6px;width:53.64999999999998px;text-align:right;top:387.5px;transform:translateY(-70%)">(635,449)</div>
<div class="c num" style="left:591.75px;width:53.64999999999998px;text-align:right;top:387.5px;transform:translateY(-70%)">(638,435)</div>
<div class="c num" style="left:646.9px;width:53.64999999999998px;text-align:right;top:387.5px;transform:translateY(-70%)">(645,473)</div>
<div class="c num" style="left:702.05px;width:53.65000000000009px;text-align:right;top:387.5px;transform:translateY(-70%)">(650,144)</div>
<div class="c num" style="left:757.2px;width:53.649999999999864px;text-align:right;top:387.5px;transform:translateY(-70%)">(661,668)</div>
<div class="c num" style="left:812.3499999999999px;width:53.65000000000009px;text-align:right;top:387.5px;transform:translateY(-70%)">(665,607)</div>
<div class="c num" style="left:867.5px;width:53.64999999999998px;text-align:right;top:387.5px;transform:translateY(-70%)">(661,070)</div>
<div class="c num" style="left:922.65px;width:53.64999999999998px;text-align:right;top:387.5px;transform:translateY(-70%)">(420,478)</div>
<div class="c lw" style="left:261px;width:50.5px;text-align:right;top:400.0px;transform:translateY(-70%)">2,998,214</div>
<div class="c lw" style="left:316.0px;width:50.64999999999998px;text-align:right;top:400.0px;transform:translateY(-70%)">3,106,885</div>
<div class="c lw" style="left:371.15px;width:50.650000000000034px;text-align:right;top:400.0px;transform:translateY(-70%)">3,048,834</div>
<div class="c lw" style="left:426.3px;width:50.64999999999998px;text-align:right;top:400.0px;transform:translateY(-70%)">3,146,684</div>
<div class="c lw" style="left:481.45px;width:50.650000000000034px;text-align:right;top:400.0px;transform:translateY(-70%)">3,166,722</div>
<div class="c lw" style="left:536.6px;width:50.64999999999998px;text-align:right;top:400.0px;transform:translateY(-70%)">3,206,197</div>
<div class="c lw" style="left:591.75px;width:50.64999999999998px;text-align:right;top:400.0px;transform:translateY(-70%)">3,221,127</div>
<div class="c lw" style="left:646.9px;width:50.64999999999998px;text-align:right;top:400.0px;transform:translateY(-70%)">3,256,317</div>
<div class="c lw" style="left:702.05px;width:50.65000000000009px;text-align:right;top:400.0px;transform:translateY(-70%)">3,279,672</div>
<div class="c lw" style="left:757.2px;width:50.649999999999864px;text-align:right;top:400.0px;transform:translateY(-70%)">3,337,292</div>
<div class="c lw" style="left:812.3499999999999px;width:50.65000000000009px;text-align:right;top:400.0px;transform:translateY(-70%)">3,356,987</div>
<div class="c lw" style="left:867.5px;width:50.64999999999998px;text-align:right;top:400.0px;transform:translateY(-70%)">3,334,302</div>
<div class="c lw" style="left:922.65px;width:50.64999999999998px;text-align:right;top:400.0px;transform:translateY(-70%)">1,179,628</div>
<div class="c lw" style="left:261px;width:53.5px;text-align:right;top:412.5px;transform:translateY(-70%)">(884,578)</div>
<div class="c lw" style="left:316.0px;width:53.64999999999998px;text-align:right;top:412.5px;transform:translateY(-70%)">(902,848)</div>
<div class="c lw" style="left:371.15px;width:53.650000000000034px;text-align:right;top:412.5px;transform:translateY(-70%)">(887,875)</div>
<div class="c lw" style="left:426.3px;width:53.64999999999998px;text-align:right;top:412.5px;transform:translateY(-70%)">(904,081)</div>
<div class="c lw" style="left:481.45px;width:53.650000000000034px;text-align:right;top:412.5px;transform:translateY(-70%)">(904,725)</div>
<div class="c lw" style="left:536.6px;width:53.64999999999998px;text-align:right;top:412.5px;transform:translateY(-70%)">(909,256)</div>
<div class="c lw" style="left:591.75px;width:53.64999999999998px;text-align:right;top:412.5px;transform:translateY(-70%)">(908,879)</div>
<div class="c lw" style="left:646.9px;width:53.64999999999998px;text-align:right;top:412.5px;transform:translateY(-70%)">(912,553)</div>
<div class="c lw" style="left:702.05px;width:53.65000000000009px;text-align:right;top:412.5px;transform:translateY(-70%)">(913,861)</div>
<div class="c lw" style="left:757.2px;width:53.649999999999864px;text-align:right;top:412.5px;transform:translateY(-70%)">(922,021)</div>
<div class="c lw" style="left:812.3499999999999px;width:53.65000000000009px;text-align:right;top:412.5px;transform:translateY(-70%)">(922,596)</div>
<div class="c lw" style="left:867.5px;width:53.64999999999998px;text-align:right;top:412.5px;transform:translateY(-70%)">(914,696)</div>
<div class="c lw" style="left:922.65px;width:53.64999999999998px;text-align:right;top:412.5px;transform:translateY(-70%)">(670,740)</div>
<div class="c num" style="left:261px;width:50.5px;text-align:right;top:425.0px;transform:translateY(-70%)">2,113,636</div>
<div class="c num" style="left:316.0px;width:50.64999999999998px;text-align:right;top:425.0px;transform:translateY(-70%)">2,204,037</div>
<div class="c num" style="left:371.15px;width:50.650000000000034px;text-align:right;top:425.0px;transform:translateY(-70%)">2,160,959</div>
<div class="c num" style="left:426.3px;width:50.64999999999998px;text-align:right;top:425.0px;transform:translateY(-70%)">2,242,603</div>
<div class="c num" style="left:481.45px;width:50.650000000000034px;text-align:right;top:425.0px;transform:translateY(-70%)">2,261,997</div>
<div class="c num" style="left:536.6px;width:50.64999999999998px;text-align:right;top:425.0px;transform:translateY(-70%)">2,296,941</div>
<div class="c num" style="left:591.75px;width:50.64999999999998px;text-align:right;top:425.0px;transform:translateY(-70%)">2,312,248</div>
<div class="c num" style="left:646.9px;width:50.64999999999998px;text-align:right;top:425.0px;transform:translateY(-70%)">2,343,764</div>
<div class="c num" style="left:702.05px;width:50.65000000000009px;text-align:right;top:425.0px;transform:translateY(-70%)">2,365,811</div>
<div class="c num" style="left:757.2px;width:50.649999999999864px;text-align:right;top:425.0px;transform:translateY(-70%)">2,415,271</div>
<div class="c num" style="left:812.3499999999999px;width:50.65000000000009px;text-align:right;top:425.0px;transform:translateY(-70%)">2,434,391</div>
<div class="c num" style="left:867.5px;width:50.64999999999998px;text-align:right;top:425.0px;transform:translateY(-70%)">2,419,606</div>
<div class="c num" style="left:922.65px;width:50.64999999999998px;text-align:right;top:425.0px;transform:translateY(-70%)">508,888</div>
<div class="c num" style="left:261px;width:50.5px;text-align:right;top:437.5px;transform:translateY(-70%)">2,111,925</div>
<div class="c num" style="left:316.0px;width:50.64999999999998px;text-align:right;top:437.5px;transform:translateY(-70%)">2,202,326</div>
<div class="c num" style="left:371.15px;width:50.650000000000034px;text-align:right;top:437.5px;transform:translateY(-70%)">2,159,248</div>
<div class="c num" style="left:426.3px;width:50.64999999999998px;text-align:right;top:437.5px;transform:translateY(-70%)">2,240,892</div>
<div class="c num" style="left:481.45px;width:50.650000000000034px;text-align:right;top:437.5px;transform:translateY(-70%)">2,260,286</div>
<div class="c num" style="left:536.6px;width:50.64999999999998px;text-align:right;top:437.5px;transform:translateY(-70%)">2,295,230</div>
<div class="c num" style="left:591.75px;width:50.64999999999998px;text-align:right;top:437.5px;transform:translateY(-70%)">2,310,537</div>
<div class="c num" style="left:646.9px;width:50.64999999999998px;text-align:right;top:437.5px;transform:translateY(-70%)">2,342,053</div>
<div class="c num" style="left:702.05px;width:50.65000000000009px;text-align:right;top:437.5px;transform:translateY(-70%)">2,364,100</div>
<div class="c num" style="left:757.2px;width:50.649999999999864px;text-align:right;top:437.5px;transform:translateY(-70%)">2,413,560</div>
<div class="c num" style="left:812.3499999999999px;width:50.65000000000009px;text-align:right;top:437.5px;transform:translateY(-70%)">2,432,680</div>
<div class="c num" style="left:867.5px;width:50.64999999999998px;text-align:right;top:437.5px;transform:translateY(-70%)">2,417,895</div>
<div class="c num" style="left:922.65px;width:50.64999999999998px;text-align:right;top:437.5px;transform:translateY(-70%)">507,438</div>
<div class="c num" style="left:261px;width:50.5px;text-align:right;top:462.5px;transform:translateY(-70%)">1,450,000</div>
<div class="c num dash" style="left:316.0px;width:50.14999999999998px;text-align:right;top:462.5px;transform:translateY(-70%)">-</div>
<div class="c num dash" style="left:371.15px;width:50.150000000000034px;text-align:right;top:462.5px;transform:translateY(-70%)">-</div>
<div class="c num dash" style="left:426.3px;width:50.14999999999998px;text-align:right;top:462.5px;transform:translateY(-70%)">-</div>
<div class="c num dash" style="left:481.45px;width:50.150000000000034px;text-align:right;top:462.5px;transform:translateY(-70%)">-</div>
<div class="c num dash" style="left:536.6px;width:50.14999999999998px;text-align:right;top:462.5px;transform:translateY(-70%)">-</div>
<div class="c num dash" style="left:591.75px;width:50.14999999999998px;text-align:right;top:462.5px;transform:translateY(-70%)">-</div>
<div class="c num dash" style="left:646.9px;width:50.14999999999998px;text-align:right;top:462.5px;transform:translateY(-70%)">-</div>
<div class="c num dash" style="left:702.05px;width:50.15000000000009px;text-align:right;top:462.5px;transform:translateY(-70%)">-</div>
<div class="c num dash" style="left:757.2px;width:50.149999999999864px;text-align:right;top:462.5px;transform:translateY(-70%)">-</div>
<div class="c num dash" style="left:812.3499999999999px;width:50.15000000000009px;text-align:right;top:462.5px;transform:translateY(-70%)">-</div>
<div class="c num dash" style="left:867.5px;width:50.14999999999998px;text-align:right;top:462.5px;transform:translateY(-70%)">-</div>
<div class="c num dash" style="left:922.65px;width:50.14999999999998px;text-align:right;top:462.5px;transform:translateY(-70%)">-</div>
<div class="c num dash" style="left:316.0px;width:50.14999999999998px;text-align:right;top:475.0px;transform:translateY(-70%)">-</div>
<div class="c num dash" style="left:371.15px;width:50.150000000000034px;text-align:right;top:475.0px;transform:translateY(-70%)">-</div>
<div class="c num dash" style="left:426.3px;width:50.14999999999998px;text-align:right;top:475.0px;transform:translateY(-70%)">-</div>
<div class="c num dash" style="left:481.45px;width:50.150000000000034px;text-align:right;top:475.0px;transform:translateY(-70%)">-</div>
<div class="c num dash" style="left:536.6px;width:50.14999999999998px;text-align:right;top:475.0px;transform:translateY(-70%)">-</div>
<div class="c num dash" style="left:591.75px;width:50.14999999999998px;text-align:right;top:475.0px;transform:translateY(-70%)">-</div>
<div class="c num dash" style="left:646.9px;width:50.14999999999998px;text-align:right;top:475.0px;transform:translateY(-70%)">-</div>
<div class="c num dash" style="left:702.05px;width:50.15000000000009px;text-align:right;top:475.0px;transform:translateY(-70%)">-</div>
<div class="c num dash" style="left:757.2px;width:50.149999999999864px;text-align:right;top:475.0px;transform:translateY(-70%)">-</div>
<div class="c num dash" style="left:812.3499999999999px;width:50.15000000000009px;text-align:right;top:475.0px;transform:translateY(-70%)">-</div>
<div class="c num dash" style="left:867.5px;width:50.14999999999998px;text-align:right;top:475.0px;transform:translateY(-70%)">-</div>
<div class="c num dash" style="left:922.65px;width:50.14999999999998px;text-align:right;top:475.0px;transform:translateY(-70%)">-</div>
<div class="c num" style="left:261px;width:50.5px;text-align:right;top:487.5px;transform:translateY(-70%)">1,450,000</div>
<div class="c num dash" style="left:316.0px;width:50.14999999999998px;text-align:right;top:487.5px;transform:translateY(-70%)">-</div>
<div class="c num dash" style="left:371.15px;width:50.150000000000034px;text-align:right;top:487.5px;transform:translateY(-70%)">-</div>
<div class="c num dash" style="left:426.3px;width:50.14999999999998px;text-align:right;top:487.5px;transform:translateY(-70%)">-</div>
<div class="c num dash" style="left:481.45px;width:50.150000000000034px;text-align:right;top:487.5px;transform:translateY(-70%)">-</div>
<div class="c num dash" style="left:536.6px;width:50.14999999999998px;text-align:right;top:487.5px;transform:translateY(-70%)">-</div>
<div class="c num dash" style="left:591.75px;width:50.14999999999998px;text-align:right;top:487.5px;transform:translateY(-70%)">-</div>
<div class="c num dash" style="left:646.9px;width:50.14999999999998px;text-align:right;top:487.5px;transform:translateY(-70%)">-</div>
<div class="c num dash" style="left:702.05px;width:50.15000000000009px;text-align:right;top:487.5px;transform:translateY(-70%)">-</div>
<div class="c num dash" style="left:757.2px;width:50.149999999999864px;text-align:right;top:487.5px;transform:translateY(-70%)">-</div>
<div class="c num dash" style="left:812.3499999999999px;width:50.15000000000009px;text-align:right;top:487.5px;transform:translateY(-70%)">-</div>
<div class="c num dash" style="left:867.5px;width:50.14999999999998px;text-align:right;top:487.5px;transform:translateY(-70%)">-</div>
<div class="c num dash" style="left:922.65px;width:50.14999999999998px;text-align:right;top:487.5px;transform:translateY(-70%)">-</div>
<div class="c num dash" style="left:316.0px;width:50.14999999999998px;text-align:right;top:500.0px;transform:translateY(-70%)">-</div>
<div class="c num dash" style="left:371.15px;width:50.150000000000034px;text-align:right;top:500.0px;transform:translateY(-70%)">-</div>
<div class="c num dash" style="left:426.3px;width:50.14999999999998px;text-align:right;top:500.0px;transform:translateY(-70%)">-</div>
<div class="c num dash" style="left:481.45px;width:50.150000000000034px;text-align:right;top:500.0px;transform:translateY(-70%)">-</div>
<div class="c num dash" style="left:536.6px;width:50.14999999999998px;text-align:right;top:500.0px;transform:translateY(-70%)">-</div>
<div class="c num dash" style="left:591.75px;width:50.14999999999998px;text-align:right;top:500.0px;transform:translateY(-70%)">-</div>
<div class="c num dash" style="left:646.9px;width:50.14999999999998px;text-align:right;top:500.0px;transform:translateY(-70%)">-</div>
<div class="c num dash" style="left:702.05px;width:50.15000000000009px;text-align:right;top:500.0px;transform:translateY(-70%)">-</div>
<div class="c num dash" style="left:757.2px;width:50.149999999999864px;text-align:right;top:500.0px;transform:translateY(-70%)">-</div>
<div class="c num dash" style="left:812.3499999999999px;width:50.15000000000009px;text-align:right;top:500.0px;transform:translateY(-70%)">-</div>
<div class="c num dash" style="left:867.5px;width:50.14999999999998px;text-align:right;top:500.0px;transform:translateY(-70%)">-</div>
<div class="c num dash" style="left:922.65px;width:50.14999999999998px;text-align:right;top:500.0px;transform:translateY(-70%)">-</div>
<div class="c num" style="left:261px;width:53.5px;text-align:right;top:512.5px;transform:translateY(-70%)">(1,450,000)</div>
<div class="c num dash" style="left:316.0px;width:50.14999999999998px;text-align:right;top:512.5px;transform:translateY(-70%)">-</div>
<div class="c num dash" style="left:371.15px;width:50.150000000000034px;text-align:right;top:512.5px;transform:translateY(-70%)">-</div>
<div class="c num dash" style="left:426.3px;width:50.14999999999998px;text-align:right;top:512.5px;transform:translateY(-70%)">-</div>
<div class="c num dash" style="left:481.45px;width:50.150000000000034px;text-align:right;top:512.5px;transform:translateY(-70%)">-</div>
<div class="c num dash" style="left:536.6px;width:50.14999999999998px;text-align:right;top:512.5px;transform:translateY(-70%)">-</div>
<div class="c num dash" style="left:591.75px;width:50.14999999999998px;text-align:right;top:512.5px;transform:translateY(-70%)">-</div>
<div class="c num dash" style="left:646.9px;width:50.14999999999998px;text-align:right;top:512.5px;transform:translateY(-70%)">-</div>
<div class="c num dash" style="left:702.05px;width:50.15000000000009px;text-align:right;top:512.5px;transform:translateY(-70%)">-</div>
<div class="c num dash" style="left:757.2px;width:50.149999999999864px;text-align:right;top:512.5px;transform:translateY(-70%)">-</div>
<div class="c num dash" style="left:812.3499999999999px;width:50.15000000000009px;text-align:right;top:512.5px;transform:translateY(-70%)">-</div>
<div class="c num dash" style="left:867.5px;width:50.14999999999998px;text-align:right;top:512.5px;transform:translateY(-70%)">-</div>
<div class="c num dash" style="left:922.65px;width:50.14999999999998px;text-align:right;top:512.5px;transform:translateY(-70%)">-</div>
<div class="c num dash" style="left:316.0px;width:50.14999999999998px;text-align:right;top:525.0px;transform:translateY(-70%)">-</div>
<div class="c num dash" style="left:371.15px;width:50.150000000000034px;text-align:right;top:525.0px;transform:translateY(-70%)">-</div>
<div class="c num dash" style="left:426.3px;width:50.14999999999998px;text-align:right;top:525.0px;transform:translateY(-70%)">-</div>
<div class="c num dash" style="left:481.45px;width:50.150000000000034px;text-align:right;top:525.0px;transform:translateY(-70%)">-</div>
<div class="c num dash" style="left:536.6px;width:50.14999999999998px;text-align:right;top:525.0px;transform:translateY(-70%)">-</div>
<div class="c num dash" style="left:591.75px;width:50.14999999999998px;text-align:right;top:525.0px;transform:translateY(-70%)">-</div>
<div class="c num dash" style="left:646.9px;width:50.14999999999998px;text-align:right;top:525.0px;transform:translateY(-70%)">-</div>
<div class="c num dash" style="left:702.05px;width:50.15000000000009px;text-align:right;top:525.0px;transform:translateY(-70%)">-</div>
<div class="c num dash" style="left:757.2px;width:50.149999999999864px;text-align:right;top:525.0px;transform:translateY(-70%)">-</div>
<div class="c num dash" style="left:812.3499999999999px;width:50.15000000000009px;text-align:right;top:525.0px;transform:translateY(-70%)">-</div>
<div class="c num dash" style="left:867.5px;width:50.14999999999998px;text-align:right;top:525.0px;transform:translateY(-70%)">-</div>
<div class="c num dash" style="left:922.65px;width:50.14999999999998px;text-align:right;top:525.0px;transform:translateY(-70%)">-</div>
<div class="c num dash" style="left:316.0px;width:50.14999999999998px;text-align:right;top:537.5px;transform:translateY(-70%)">-</div>
<div class="c num dash" style="left:371.15px;width:50.150000000000034px;text-align:right;top:537.5px;transform:translateY(-70%)">-</div>
<div class="c num dash" style="left:426.3px;width:50.14999999999998px;text-align:right;top:537.5px;transform:translateY(-70%)">-</div>
<div class="c num dash" style="left:481.45px;width:50.150000000000034px;text-align:right;top:537.5px;transform:translateY(-70%)">-</div>
<div class="c num dash" style="left:536.6px;width:50.14999999999998px;text-align:right;top:537.5px;transform:translateY(-70%)">-</div>
<div class="c num dash" style="left:591.75px;width:50.14999999999998px;text-align:right;top:537.5px;transform:translateY(-70%)">-</div>
<div class="c num dash" style="left:646.9px;width:50.14999999999998px;text-align:right;top:537.5px;transform:translateY(-70%)">-</div>
<div class="c num dash" style="left:702.05px;width:50.15000000000009px;text-align:right;top:537.5px;transform:translateY(-70%)">-</div>
<div class="c num dash" style="left:757.2px;width:50.149999999999864px;text-align:right;top:537.5px;transform:translateY(-70%)">-</div>
<div class="c num dash" style="left:812.3499999999999px;width:50.15000000000009px;text-align:right;top:537.5px;transform:translateY(-70%)">-</div>
<div class="c num dash" style="left:867.5px;width:50.14999999999998px;text-align:right;top:537.5px;transform:translateY(-70%)">-</div>
<div class="c num dash" style="left:922.65px;width:50.14999999999998px;text-align:right;top:537.5px;transform:translateY(-70%)">-</div>
<div class="c num dash" style="left:316.0px;width:50.14999999999998px;text-align:right;top:550.0px;transform:translateY(-70%)">-</div>
<div class="c num dash" style="left:371.15px;width:50.150000000000034px;text-align:right;top:550.0px;transform:translateY(-70%)">-</div>
<div class="c num dash" style="left:426.3px;width:50.14999999999998px;text-align:right;top:550.0px;transform:translateY(-70%)">-</div>
<div class="c num dash" style="left:481.45px;width:50.150000000000034px;text-align:right;top:550.0px;transform:translateY(-70%)">-</div>
<div class="c num dash" style="left:536.6px;width:50.14999999999998px;text-align:right;top:550.0px;transform:translateY(-70%)">-</div>
<div class="c num dash" style="left:591.75px;width:50.14999999999998px;text-align:right;top:550.0px;transform:translateY(-70%)">-</div>
<div class="c num dash" style="left:646.9px;width:50.14999999999998px;text-align:right;top:550.0px;transform:translateY(-70%)">-</div>
<div class="c num dash" style="left:702.05px;width:50.15000000000009px;text-align:right;top:550.0px;transform:translateY(-70%)">-</div>
<div class="c num dash" style="left:757.2px;width:50.149999999999864px;text-align:right;top:550.0px;transform:translateY(-70%)">-</div>
<div class="c num dash" style="left:812.3499999999999px;width:50.15000000000009px;text-align:right;top:550.0px;transform:translateY(-70%)">-</div>
<div class="c num dash" style="left:867.5px;width:50.14999999999998px;text-align:right;top:550.0px;transform:translateY(-70%)">-</div>
<div class="c num dash" style="left:922.65px;width:50.14999999999998px;text-align:right;top:550.0px;transform:translateY(-70%)">-</div>
<div class="c num" style="left:316.0px;width:53.64999999999998px;text-align:right;top:562.8px;transform:translateY(-70%)">(15,817)</div>
<div class="c num" style="left:371.15px;width:53.650000000000034px;text-align:right;top:562.8px;transform:translateY(-70%)">(15,817)</div>
<div class="c num" style="left:426.3px;width:53.64999999999998px;text-align:right;top:562.8px;transform:translateY(-70%)">(15,817)</div>
<div class="c num" style="left:481.45px;width:53.650000000000034px;text-align:right;top:562.8px;transform:translateY(-70%)">(15,817)</div>
<div class="c num" style="left:536.6px;width:53.64999999999998px;text-align:right;top:562.8px;transform:translateY(-70%)">(15,817)</div>
<div class="c num" style="left:591.75px;width:53.64999999999998px;text-align:right;top:562.8px;transform:translateY(-70%)">(15,817)</div>
<div class="c num" style="left:646.9px;width:53.64999999999998px;text-align:right;top:562.8px;transform:translateY(-70%)">(15,817)</div>
<div class="c num" style="left:702.05px;width:53.65000000000009px;text-align:right;top:562.8px;transform:translateY(-70%)">(15,817)</div>
<div class="c num" style="left:757.2px;width:53.649999999999864px;text-align:right;top:562.8px;transform:translateY(-70%)">(15,817)</div>
<div class="c num" style="left:812.3499999999999px;width:53.65000000000009px;text-align:right;top:562.8px;transform:translateY(-70%)">(15,817)</div>
<div class="c num" style="left:867.5px;width:53.64999999999998px;text-align:right;top:562.8px;transform:translateY(-70%)">(15,817)</div>
<div class="c num" style="left:922.65px;width:53.64999999999998px;text-align:right;top:562.8px;transform:translateY(-70%)">(15,817)</div>
<div class="tabs"></div>
<div class="status"></div>
<svg class="a" style="left:0;top:0" width="1000" height="31" viewBox="0 0 1000 31">
<!-- excel icon -->
<g fill="none" stroke="#e3f3e8" stroke-width="1">
<rect x="13.5" y="10.5" width="7.5" height="10"/>
<line x1="16" y1="13.8" x2="21" y2="13.8"/><line x1="16" y1="17.2" x2="21" y2="17.2"/><line x1="17.5" y1="10.5" x2="17.5" y2="20.5"/>
</g>
<rect x="10" y="12" width="6.5" height="7" fill="#e3f3e8"/>
<path d="M11.8 13.6 L14.7 17.4 M14.7 13.6 L11.8 17.4" stroke="#107a44" stroke-width="1"/>
<!-- save icon -->
<g fill="none" stroke="#d9f0df" stroke-width="1.1">
<path d="M31.5 10.8 H40.5 L42 12.3 V20.8 H31.5 Z"/>
<rect x="33.5" y="10.8" width="6" height="3.5"/>
<rect x="33.5" y="16.5" width="6" height="4.3"/>
</g>
<!-- undo -->
<g fill="none" stroke="#d9f0df" stroke-width="1.2" stroke-linecap="round">
<path d="M51 13.5 C53 10.5 58.5 10.8 58.5 15 C58.5 18 56 20 53.5 21.5"/>
<path d="M50.5 10.5 V14 H54"/>
</g>
<line x1="64.5" y1="14.8" x2="67.5" y2="14.8" stroke="#d9f0df" stroke-width="1"/>
<!-- redo dim -->
<g fill="none" stroke="#5a9c74" stroke-width="1.2" stroke-linecap="round">
<path d="M82 13.5 C80 10.5 74.5 10.8 74.5 15 C74.5 18 77 20 79.5 21.5"/>
<path d="M82.5 10.5 V14 H79"/>
</g>
<line x1="88.5" y1="14.8" x2="91.5" y2="14.8" stroke="#5a9c74" stroke-width="1"/>
<path d="M101.5 12.8 H106.5 M102 15.3 L104 17.3 L106 15.3 Z" stroke="#8cc4a0" stroke-width="0.9" fill="#8cc4a0"/>
<!-- search box -->
<rect x="385.5" y="5.5" width="239.5" height="20" rx="2" fill="#d6e6db"/>
<circle cx="401" cy="13.6" r="3.2" fill="none" stroke="#3a4a3f" stroke-width="1"/>
<line x1="398.8" y1="16" x2="396" y2="18.8" stroke="#3a4a3f" stroke-width="1.1"/>
<!-- avatar -->
<circle cx="891" cy="15.5" r="7.5" fill="#e0481c"/>
<text x="891" y="17.8" font-size="5.5" text-anchor="middle" font-family="Liberation Sans" fill="#ffd9c9">RS</text>
<!-- window controls -->
<line x1="917.5" y1="15.5" x2="925.5" y2="15.5" stroke="#e6f2ea" stroke-width="1"/>
<rect x="950.5" y="12.5" width="6" height="6" fill="none" stroke="#e6f2ea" stroke-width="1"/>
<path d="M952.5 12.5 V10.5 H958.5 V16.5 H956.5" fill="none" stroke="#e6f2ea" stroke-width="1"/>
<path d="M980 11 L988 19 M988 11 L980 19" stroke="#e6f2ea" stroke-width="1"/>
</svg>
<div class="a" style="left:116.5px;top:10.5px;font-size:8.4px;color:#eaf4ed;line-height:10px;transform:scaleX(0.91);transform-origin:0 50%;-webkit-text-stroke:0.15px #eaf4ed">Heavy Equipment Manufacturer 20 Years Financial Model.xlsx&nbsp; -&nbsp; Excel</div>
<div class="a" style="left:412px;top:10px;font-size:8.5px;color:#3b4a40;line-height:11px">Search</div>
<div class="menu" style="left:14px;transform:scaleX(0.8599);transform-origin:0 0">File</div>
<div class="menu" style="left:44.8px;transform:scaleX(0.9482);transform-origin:0 0">Home</div>
<div class="menu" style="left:80.7px;transform:scaleX(0.9805);transform-origin:0 0">Insert</div>
<div class="menu" style="left:116px;transform:scaleX(0.9755);transform-origin:0 0">Draw</div>
<div class="menu" style="left:150px;transform:scaleX(0.9399);transform-origin:0 0">Page Layout</div>
<div class="menu" style="left:211.5px;transform:scaleX(0.9631);transform-origin:0 0">Formulas</div>
<div class="menu" style="left:260.5px;transform:scaleX(0.9371);transform-origin:0 0">Data</div>
<div class="menu" style="left:293px;transform:scaleX(0.8787);transform-origin:0 0">Review</div>
<div class="menu" style="left:332.6px;transform:scaleX(0.9925);transform-origin:0 0">View</div>
<div class="menu" style="left:365px;transform:scaleX(0.9554);transform-origin:0 0">Developer</div>
<div class="menu" style="left:417.6px;transform:scaleX(0.9838);transform-origin:0 0">Help</div>
<div class="menu" style="left:448.8px;transform:scaleX(1.0147);transform-origin:0 0">Acrobat</div>
<div class="menu" style="left:493px;transform:scaleX(0.9646);transform-origin:0 0">Power Pivot</div>
<div class="a" style="left:0;top:48.5px;width:1000px;height:3.5px;background:#f1f1f2;border-bottom:1px solid #dedede"></div>
<div class="a" style="left:946px;top:33.5px;width:46px;height:15px;background:#1b7c45;border-radius:2px"></div>
<svg class="a" style="left:946px;top:33.5px" width="46" height="15" viewBox="0 0 46 15">
<path d="M8.5 5.5 H5.5 V11.5 H11.5 V9.5" fill="none" stroke="#d6eede" stroke-width="0.9"/><path d="M7.5 9.5 C8 6.5 9.5 5 12 5 M10.5 3.5 L12.3 5 L10.5 6.7" fill="none" stroke="#d6eede" stroke-width="0.9"/>
<path d="M40 6.5 L42 8.5 L44 6.5" fill="none" stroke="#cfe9d8" stroke-width="0.9"/>
</svg>
<div class="a" style="left:960px;top:35.8px;font-size:8.4px;color:#fff;line-height:11px">Share</div>
<svg class="a" style="left:0;top:52px" width="18" height="12"><path d="M8 10.5 L15.5 10.5 L15.5 3 Z" fill="#c4c4c4"/></svg>
<div class="a" style="left:987px;top:51.5px;width:13px;height:507.5px;background:#f7f7f7;border-left:1px solid #e2e2e2"></div>
<svg class="a" style="left:987px;top:51.5px" width="13" height="507"><path d="M7 3 L10.5 7 L3.5 7 Z" fill="#555"/><path d="M7 505 L10.5 501 L3.5 501 Z" fill="#444"/></svg>
<div class="a" style="left:991px;top:62.8px;width:6px;height:282px;background:#777;border-radius:3px"></div>
<svg class="a" style="left:0;top:558.5px" width="120" height="19"><path d="M21 7 L18.5 10 L21 13" fill="none" stroke="#a8a8a8" stroke-width="1"/><path d="M38 7 L40.5 10 L38 13" fill="none" stroke="#555" stroke-width="1"/></svg>
<div class="tab" style="left:72px;width:42px;">How To</div>
<div class="tab" style="left:120px;width:93.75px;background:#fdfcd2;">Product Sales 25-29</div>
<div class="tab" style="left:219.5px;width:93.0px;background:#fdfcd2;">Product Sales 30-34</div>
<div class="tab" style="left:317.5px;width:93.75px;background:#fdfcd2;">Product Sales 35-39</div>
<div class="tab" style="left:416.25px;width:93.75px;background:#fdfcd2;">Product Sales 40-44</div>
<div class="tab" style="left:515px;width:72.5px;background:#fdfcd2;">2025 Accounts</div>
<div class="tab" style="left:592.5px;width:101.5px;">2025 MRR Dashboard</div>
<div class="tab" style="left:697.5px;width:43.0px;background:#fdfcd2;">IS 2025</div>
<div class="a" style="left:745px;top:558.5px;width:44.5px;height:19.5px;background:#fff"></div>
<div class="a" style="left:745px;top:559px;width:44.5px;font-size:8.8px;font-weight:bold;color:#1a1a1a;line-height:18px;text-align:center">CF 2025</div>
<div class="a" style="left:751px;top:574px;width:33px;height:1.2px;background:#217346"></div>
<div class="tab" style="left:795px;width:43px">BS 2025</div>
<div class="a" style="left:851px;top:560px;width:29.5px;height:18px;font-size:8.9px;color:#222;line-height:20px">Statem</div>
<svg class="a" style="left:880px;top:560px" width="120" height="19">
<rect x="65" y="1" width="44" height="16" fill="#eef0f2"/>
<circle cx="8.5" cy="8.5" r="0.8" fill="#333"/><circle cx="11" cy="8.5" r="0.8" fill="#333"/><circle cx="13.5" cy="8.5" r="0.8" fill="#333"/>
<path d="M31.5 5 V12 M28 8.5 H35" stroke="#333" stroke-width="1"/>
<circle cx="52" cy="6" r="0.8" fill="#333"/><circle cx="52" cy="8.8" r="0.8" fill="#333"/><circle cx="52" cy="11.6" r="0.8" fill="#333"/>
<path d="M70.5 6 L67.5 9 L70.5 12 Z" fill="#333"/>
<rect x="74" y="6.8" width="18" height="4.5" rx="2.2" fill="#555"/>
<path d="M101 6 L104 9 L101 12 Z" fill="#333"/>
</svg>
<div class="a" style="left:7.7px;top:583.2px;font-size:6.6px;color:#333;line-height:8px">Ready</div>
<svg class="a" style="left:0;top:580px" width="1000" height="12">
<rect x="39.5" y="3" width="7" height="8" fill="none" stroke="#444" stroke-width="1"/><path d="M39.5 5.5 H46.5" stroke="#444" stroke-width="0.8"/><circle cx="46" cy="9" r="2.3" fill="#f3f3f3" stroke="#444" stroke-width="0.8"/><circle cx="46" cy="9" r="1.1" fill="#333"/>
<path d="M60 3.5 H67 M63.5 3.5 V7 M60.5 11 L63.5 7 L66.5 11" fill="none" stroke="#444" stroke-width="1"/><path d="M65.5 8.5 L67 10 L69.5 6.5" fill="none" stroke="#444" stroke-width="0.8"/>
<rect x="808" y="0" width="23" height="12" fill="#dedede"/>
<rect x="814.5" y="2.5" width="9" height="8.5" fill="none" stroke="#333" stroke-width="1"/>
<path d="M817.5 2.5 V11 M820.5 2.5 V11 M814.5 5.3 H823.5 M814.5 8.2 H823.5" stroke="#333" stroke-width="0.8"/>
<rect x="840.5" y="2.5" width="9" height="8.5" fill="none" stroke="#444" stroke-width="1"/>
<path d="M842.5 2.5 V11 M844.5 2.5 V11 M846.5 2.5 V11 M848.5 2.5 V11" stroke="#666" stroke-width="0.7"/>
<rect x="866.5" y="2.5" width="9" height="8.5" fill="none" stroke="#444" stroke-width="1"/>
<path d="M866.5 7.5 H870.5 V2.5" fill="none" stroke="#444" stroke-width="1"/>
<path d="M888 6.5 H892.5" stroke="#555" stroke-width="0.9"/>
<path d="M896 6.5 H961" stroke="#777" stroke-width="0.8"/>
<rect x="928" y="3" width="3" height="8" fill="#444"/>
<path d="M965 6.5 H970 M967.5 4 V9" stroke="#666" stroke-width="0.8"/>
</svg>
<div class="a" style="left:72px;top:583.2px;font-size:6.7px;font-weight:bold;color:#222;line-height:8px">Accessibility: Investigate</div>
<div class="a" style="left:978.5px;top:583.2px;font-size:6.9px;color:#333;line-height:8px">100%</div>
</body></html>
